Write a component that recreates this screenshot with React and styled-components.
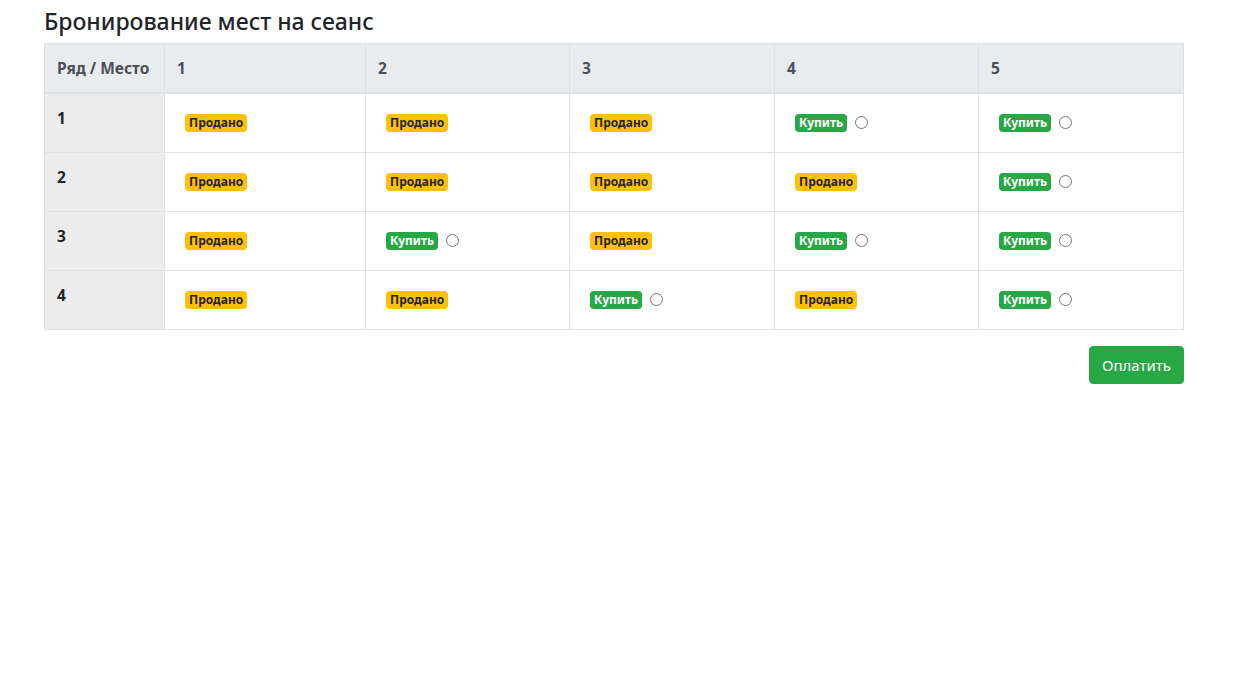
import React from "react";
import styled, { createGlobalStyle } from "styled-components";

const GlobalStyle = createGlobalStyle`
  body {
    margin: 0;
    font-family: "Noto Sans", "Open Sans", Arial, sans-serif;
    font-size: 16px;
    line-height: 1.5;
    color: #212529;
    background: #fff;
  }
`;

const SOLD = "sold";
const FREE = "free";

const seats = [
  [SOLD, SOLD, SOLD, FREE, FREE],
  [SOLD, SOLD, SOLD, SOLD, FREE],
  [SOLD, FREE, SOLD, FREE, FREE],
  [SOLD, SOLD, FREE, SOLD, FREE],
];

const colWidths = [120, 201, 204, 205, 204, 205];

const App = () => {
  return (
    <Page>
      <GlobalStyle />
      <Title>Бронирование мест на сеанс</Title>
      <Table>
        <colgroup>
          {colWidths.map((w, i) => (
            <col key={i} style={{ width: w }} />
          ))}
        </colgroup>
        <thead>
          <tr>
            <HeadCell>Ряд / Место</HeadCell>
            {[1, 2, 3, 4, 5].map((n) => (
              <HeadCell key={n}>{n}</HeadCell>
            ))}
          </tr>
        </thead>
        <tbody>
          {seats.map((row, i) => (
            <tr key={i}>
              <RowCell>{i + 1}</RowCell>
              {row.map((seat, j) => (
                <Cell key={j}>
                  <Seat>
                    <Badge $free={seat === FREE}>
                      {seat === FREE ? "Купить" : "Продано"}
                    </Badge>
                    {seat === FREE && (
                      <Radio type="radio" name="seat" value={`${i + 1}-${j + 1}`} />
                    )}
                  </Seat>
                </Cell>
              ))}
            </tr>
          ))}
        </tbody>
      </Table>
      <Footer>
        <PayButton>Оплатить</PayButton>
      </Footer>
    </Page>
  );
};

const Page = styled.div`
  width: 1140px;
  padding: 6px 0 0 44px;
`;

const Title = styled.h4`
  margin: 0 0 6px;
  font-size: 23px;
  font-weight: 500;
  line-height: 31px;
  color: #212529;
`;

const Table = styled.table`
  width: 100%;
  border-collapse: collapse;
  table-layout: fixed;
  border: 1px solid #dee2e6;
`;

const HeadCell = styled.th`
  padding: 12px;
  text-align: left;
  vertical-align: bottom;
  font-size: 15.5px;
  font-weight: 700;
  line-height: 24px;
  color: #495057;
  background: #e9ecef;
  border: 1px solid #dee2e6;
  border-bottom: 2px solid #dee2e6;
  white-space: nowrap;
`;

const RowCell = styled.th`
  padding: 12px;
  text-align: left;
  vertical-align: top;
  font-size: 15.5px;
  font-weight: 700;
  line-height: 24px;
  background: #ececec;
  border: 1px solid #dee2e6;
`;

const Cell = styled.td`
  padding: 12px;
  vertical-align: top;
  border: 1px solid #dee2e6;
`;

const Seat = styled.div`
  display: flex;
  align-items: center;
  height: 18px;
  margin: 8px;
`;

const Badge = styled.span`
  display: inline-block;
  padding: 0 4px;
  font-size: 12px;
  font-weight: 700;
  line-height: 18px;
  border-radius: 4px;
  white-space: nowrap;
  color: ${(p) => (p.$free ? "#fff" : "#212529")};
  background: ${(p) => (p.$free ? "#28a745" : "#ffc107")};
`;

const Radio = styled.input`
  width: 13px;
  height: 13px;
  margin: -2px 0 0 8px;
`;

const Footer = styled.div`
  display: flex;
  justify-content: flex-end;
  margin-top: 16px;
`;

const PayButton = styled.button`
  height: 38px;
  padding: 0 12px;
  font-family: inherit;
  font-size: 15px;
  color: #fff;
  background: #28a745;
  border: 1px solid #28a745;
  border-radius: 4px;
  cursor: pointer;
`;

export default App;
